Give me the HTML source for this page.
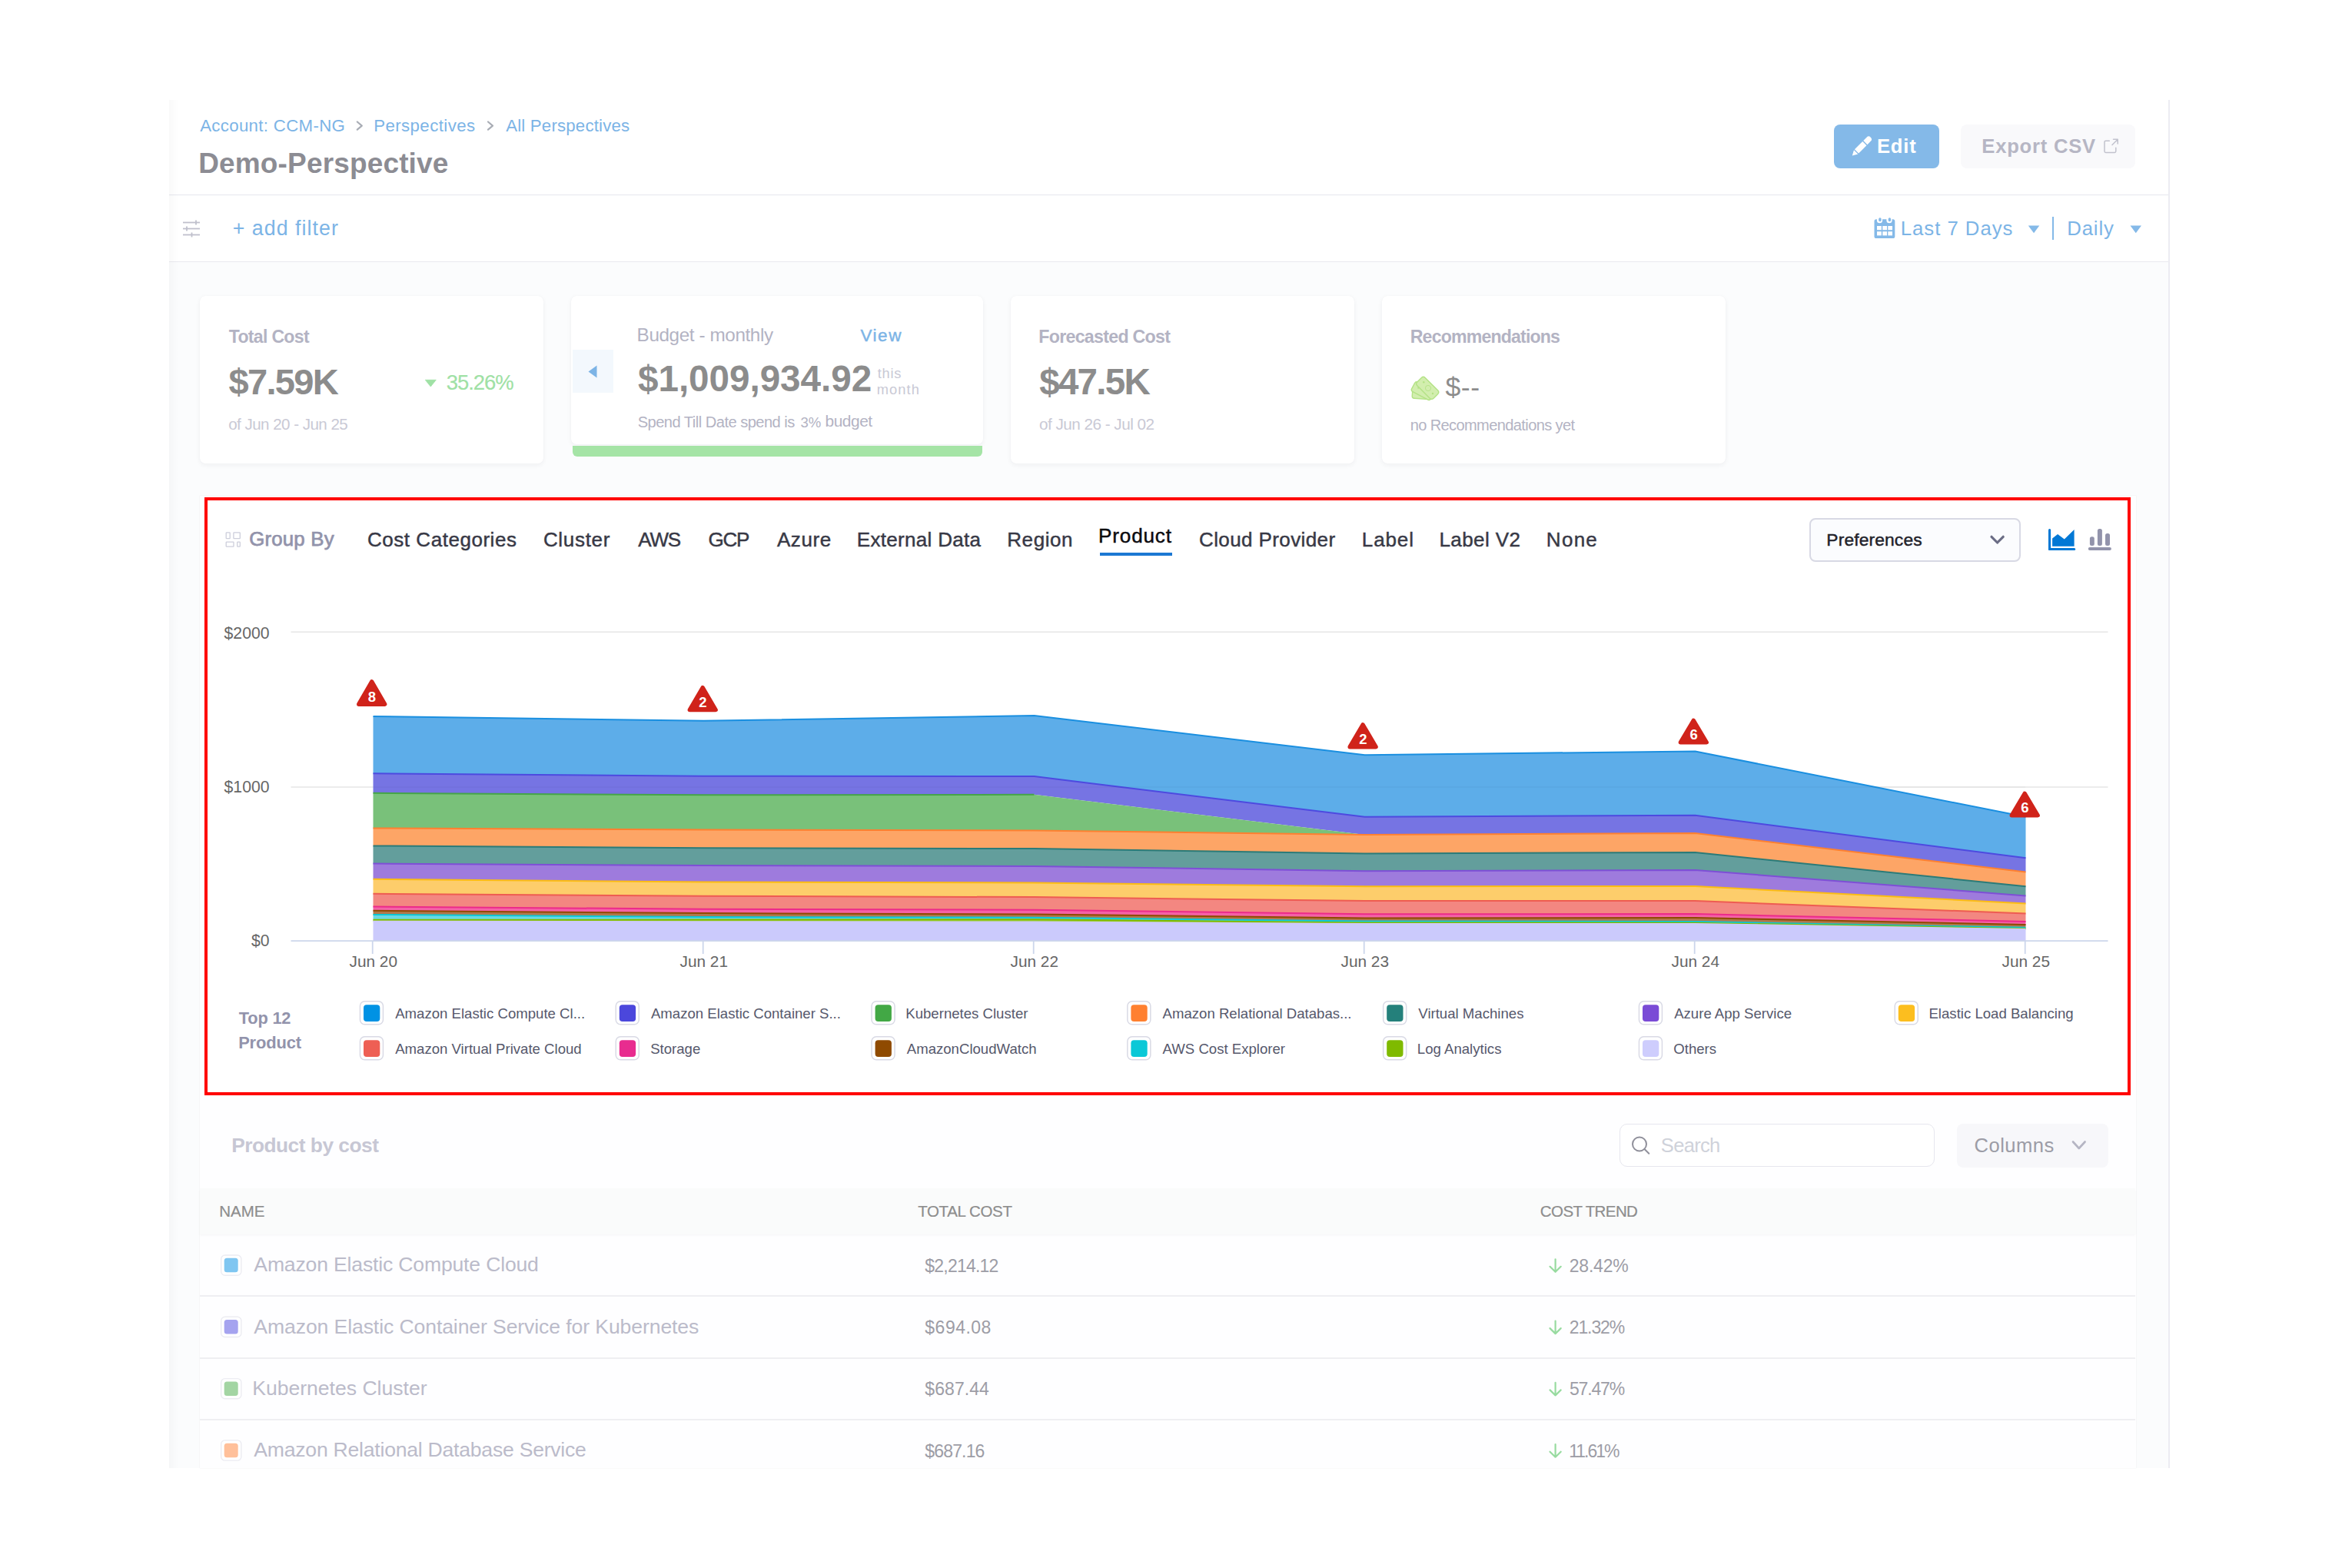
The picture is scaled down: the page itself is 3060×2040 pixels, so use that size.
<!DOCTYPE html>
<html><head><meta charset="utf-8"><style>
html,body{margin:0;padding:0;background:#ffffff;}
body{width:3060px;height:2040px;position:relative;overflow:hidden;font-family:"Liberation Sans", sans-serif;}
</style></head><body>
<div style="position:absolute;left:220px;top:130px;width:2603px;height:1780px;background:#fbfcfd"></div>
<div style="position:absolute;left:220px;top:130px;width:2601px;height:122.9px;background:#ffffff;border-bottom:1.6px solid #e9e9ef;box-sizing:content-box"></div>
<div style="position:absolute;left:220px;top:254.5px;width:2601px;height:85.8px;background:#ffffff;border-bottom:1.6px solid #e9e9ef;box-sizing:content-box"></div>
<div style="position:absolute;left:2821px;top:130px;width:2px;height:1780px;background:#ececf2"></div>
<div style="position:absolute;left:220px;top:130px;width:12px;height:1780px;background:linear-gradient(90deg,rgba(0,0,0,0.025),rgba(0,0,0,0))"></div>
<div style="position:absolute;left:2386px;top:162px;width:137px;height:57px;background:#84b9e8;border-radius:8px"></div>
<div style="position:absolute;left:2551px;top:162px;width:227px;height:57px;background:#f9f9fb;border-radius:8px"></div>
<div style="position:absolute;left:2670.3px;top:281.5px;width:2.0px;height:30.5px;background:#84b9e8"></div>
<div style="position:absolute;left:260px;top:385px;width:447px;height:218px;background:#ffffff;border-radius:7px;box-shadow:0 2px 6px rgba(40,41,61,0.055),0 0 1px rgba(40,41,61,0.06)"></div>
<div style="position:absolute;left:743px;top:385px;width:536px;height:218px;background:transparent"></div>
<div style="position:absolute;left:743px;top:385px;width:536px;height:193.2px;background:#ffffff;border-radius:7px;box-shadow:0 2px 6px rgba(40,41,61,0.055),0 0 1px rgba(40,41,61,0.06)"></div>
<div style="position:absolute;left:744.5px;top:580.2px;width:533.0px;height:13.8px;background:#a5e4a6;border-radius:0 0 6px 6px"></div>
<div style="position:absolute;left:745px;top:455px;width:53px;height:56px;background:#f3f8fd"></div>
<div style="position:absolute;left:1315px;top:385px;width:447px;height:218px;background:#ffffff;border-radius:7px;box-shadow:0 2px 6px rgba(40,41,61,0.055),0 0 1px rgba(40,41,61,0.06)"></div>
<div style="position:absolute;left:1798px;top:385px;width:447px;height:218px;background:#ffffff;border-radius:7px;box-shadow:0 2px 6px rgba(40,41,61,0.055),0 0 1px rgba(40,41,61,0.06)"></div>
<div style="position:absolute;left:260px;top:645px;width:2518.5px;height:1265px;background:#fefeff;box-shadow:0 0 1.5px rgba(40,41,61,0.10)"></div>
<div style="position:absolute;left:270px;top:650px;width:2498px;height:771px;background:#ffffff"></div>
<div style="position:absolute;left:266px;top:646.5px;width:2506px;height:778.5px;border:4px solid #ff0000;box-sizing:border-box"></div>
<div style="position:absolute;left:2354px;top:674px;width:274.5px;height:56.5px;background:#fbfcfe;border:2px solid #d8d9e4;border-radius:8px;box-sizing:border-box"></div>
<div style="position:absolute;left:260px;top:1546px;width:2518px;height:60px;background:#fafbfb;box-shadow:0 1.5px 3px rgba(40,41,61,0.035)"></div>
<div style="position:absolute;left:260px;top:1685.3px;width:2518px;height:1.5px;background:#efeff2"></div>
<div style="position:absolute;left:260px;top:1766.3px;width:2518px;height:1.5px;background:#efeff2"></div>
<div style="position:absolute;left:260px;top:1846px;width:2518px;height:1.5px;background:#efeff2"></div>
<div style="position:absolute;left:2106.5px;top:1462px;width:410.5px;height:56px;background:#ffffff;border:1.5px solid #e6e6ee;border-radius:10px;box-sizing:border-box"></div>
<div style="position:absolute;left:2546px;top:1462px;width:197px;height:56.5px;background:#f7f7fa;border-radius:8px"></div>
<svg style="position:absolute;left:0;top:0" width="3060" height="2040" viewBox="0 0 3060 2040"><line x1="378.5" y1="822.3" x2="2742.5" y2="822.3" stroke="#e6e6e6" stroke-width="1.5"/><line x1="378.5" y1="1024" x2="2742.5" y2="1024" stroke="#e6e6e6" stroke-width="1.5"/><path d="M485.5,932.0 L915.5,937.7 L1345.5,931.1 L1775.5,982.2 L2205.5,977.5 L2635.5,1062.8 L2635.5,1116.2 L2205.5,1060.8 L1775.5,1062.8 L1345.5,1010.1 L915.5,1009.8 L485.5,1006.3Z" fill="#5dade9"/><path d="M485.5,932.0 L915.5,937.7 L1345.5,931.1 L1775.5,982.2 L2205.5,977.5 L2635.5,1062.8" fill="none" stroke="#1a8fe0" stroke-width="2" stroke-linejoin="round"/><path d="M485.5,1006.3 L915.5,1009.8 L1345.5,1010.1 L1775.5,1062.8 L2205.5,1060.8 L2635.5,1116.2 L2635.5,1134.5 L2205.5,1084.1 L1775.5,1085.9 L1345.5,1033.8 L915.5,1034.3 L485.5,1031.8Z" fill="#7674e3"/><path d="M485.5,1006.3 L915.5,1009.8 L1345.5,1010.1 L1775.5,1062.8 L2205.5,1060.8 L2635.5,1116.2" fill="none" stroke="#4d4ae0" stroke-width="2" stroke-linejoin="round"/><path d="M485.5,1031.8 L915.5,1034.3 L1345.5,1033.8 L1775.5,1085.9 L2205.5,1084.1 L2635.5,1134.5 L2635.5,1134.5 L2205.5,1084.1 L1775.5,1085.9 L1345.5,1080.5 L915.5,1079.6 L485.5,1077.4Z" fill="#79c17a"/><path d="M485.5,1031.8 L915.5,1034.3 L1345.5,1033.8" fill="none" stroke="#45a548" stroke-width="2" stroke-linejoin="round"/><path d="M485.5,1077.4 L915.5,1079.6 L1345.5,1080.5 L1775.5,1085.9 L2205.5,1084.1 L2635.5,1134.5 L2635.5,1153.2 L2205.5,1109.1 L1775.5,1110.4 L1345.5,1104.1 L915.5,1103.3 L485.5,1100.4Z" fill="#fda566"/><path d="M485.5,1077.4 L915.5,1079.6 L1345.5,1080.5 L1775.5,1085.9 L2205.5,1084.1 L2635.5,1134.5" fill="none" stroke="#ff8030" stroke-width="2" stroke-linejoin="round"/><path d="M485.5,1100.4 L915.5,1103.3 L1345.5,1104.1 L1775.5,1110.4 L2205.5,1109.1 L2635.5,1153.2 L2635.5,1165.4 L2205.5,1131.9 L1775.5,1133.2 L1345.5,1126.9 L915.5,1126.1 L485.5,1123.6Z" fill="#639e9c"/><path d="M485.5,1100.4 L915.5,1103.3 L1345.5,1104.1 L1775.5,1110.4 L2205.5,1109.1 L2635.5,1153.2" fill="none" stroke="#2b7b78" stroke-width="2" stroke-linejoin="round"/><path d="M485.5,1123.6 L915.5,1126.1 L1345.5,1126.9 L1775.5,1133.2 L2205.5,1131.9 L2635.5,1165.4 L2635.5,1175.5 L2205.5,1153.0 L1775.5,1153.2 L1345.5,1148.5 L915.5,1147.5 L485.5,1143.8Z" fill="#9e7bdd"/><path d="M485.5,1123.6 L915.5,1126.1 L1345.5,1126.9 L1775.5,1133.2 L2205.5,1131.9 L2635.5,1165.4" fill="none" stroke="#7e4fd6" stroke-width="2" stroke-linejoin="round"/><path d="M485.5,1143.8 L915.5,1147.5 L1345.5,1148.5 L1775.5,1153.2 L2205.5,1153.0 L2635.5,1175.5 L2635.5,1188.5 L2205.5,1172.1 L1775.5,1172.1 L1345.5,1167.1 L915.5,1165.8 L485.5,1162.8Z" fill="#fdcd6b"/><path d="M485.5,1143.8 L915.5,1147.5 L1345.5,1148.5 L1775.5,1153.2 L2205.5,1153.0 L2635.5,1175.5" fill="none" stroke="#fbbc14" stroke-width="2" stroke-linejoin="round"/><path d="M485.5,1162.8 L915.5,1165.8 L1345.5,1167.1 L1775.5,1172.1 L2205.5,1172.1 L2635.5,1188.5 L2635.5,1199.0 L2205.5,1189.1 L1775.5,1189.3 L1345.5,1183.7 L915.5,1182.8 L485.5,1179.5Z" fill="#f38781"/><path d="M485.5,1162.8 L915.5,1165.8 L1345.5,1167.1 L1775.5,1172.1 L2205.5,1172.1 L2635.5,1188.5" fill="none" stroke="#ee5c52" stroke-width="2" stroke-linejoin="round"/><path d="M485.5,1179.5 L915.5,1182.8 L1345.5,1183.7 L1775.5,1189.3 L2205.5,1189.1 L2635.5,1199.0 L2635.5,1202.9 L2205.5,1194.1 L1775.5,1194.4 L1345.5,1189.5 L915.5,1188.1 L485.5,1184.8Z" fill="#f462a6"/><path d="M485.5,1179.5 L915.5,1182.8 L1345.5,1183.7 L1775.5,1189.3 L2205.5,1189.1 L2635.5,1199.0" fill="none" stroke="#ec2a8a" stroke-width="2" stroke-linejoin="round"/><path d="M485.5,1184.8 L915.5,1188.1 L1345.5,1189.5 L1775.5,1194.4 L2205.5,1194.1 L2635.5,1202.9 L2635.5,1206.8 L2205.5,1199.1 L1775.5,1198.5 L1345.5,1193.7 L915.5,1193.0 L485.5,1189.9Z" fill="#b0784c"/><path d="M485.5,1184.8 L915.5,1188.1 L1345.5,1189.5 L1775.5,1194.4 L2205.5,1194.1 L2635.5,1202.9" fill="none" stroke="#8f4a00" stroke-width="2" stroke-linejoin="round"/><path d="M485.5,1189.9 L915.5,1193.0 L1345.5,1193.7 L1775.5,1198.5 L2205.5,1199.1 L2635.5,1206.8 L2635.5,1208.2 L2205.5,1200.7 L1775.5,1200.4 L1345.5,1196.2 L915.5,1196.6 L485.5,1196.8Z" fill="#6ad8e3"/><path d="M485.5,1189.9 L915.5,1193.0 L1345.5,1193.7 L1775.5,1198.5 L2205.5,1199.1 L2635.5,1206.8" fill="none" stroke="#0ac8d7" stroke-width="2" stroke-linejoin="round"/><path d="M485.5,1196.8 L915.5,1196.6 L1345.5,1196.2 L1775.5,1200.4 L2205.5,1200.7 L2635.5,1208.2 L2635.5,1209.1 L2205.5,1202.0 L1775.5,1202.0 L1345.5,1199.5 L915.5,1199.3 L485.5,1198.8Z" fill="#9acd32"/><path d="M485.5,1196.8 L915.5,1196.6 L1345.5,1196.2 L1775.5,1200.4 L2205.5,1200.7 L2635.5,1208.2" fill="none" stroke="#7fba00" stroke-width="2" stroke-linejoin="round"/><path d="M485.5,1198.8 L915.5,1199.3 L1345.5,1199.5 L1775.5,1202.0 L2205.5,1202.0 L2635.5,1209.1 L2635.5,1224.0 L2205.5,1224.0 L1775.5,1224.0 L1345.5,1224.0 L915.5,1224.0 L485.5,1224.0Z" fill="#cbcafc"/><path d="M485.5,1198.8 L915.5,1199.3 L1345.5,1199.5 L1775.5,1202.0 L2205.5,1202.0 L2635.5,1209.1" fill="none" stroke="#cbcafc" stroke-width="2" stroke-linejoin="round"/><line x1="486" y1="1024" x2="2635" y2="1024" stroke="#000000" stroke-opacity="0.035" stroke-width="1.5"/><text x="350.5" y="831.2" text-anchor="end" font-family="Liberation Sans" font-size="21.2" fill="#666666">$2000</text><text x="350.5" y="1031.3" text-anchor="end" font-family="Liberation Sans" font-size="21.2" fill="#666666">$1000</text><text x="350.5" y="1230.6" text-anchor="end" font-family="Liberation Sans" font-size="21.2" fill="#666666">$0</text><text x="485.8" y="1257.6" text-anchor="middle" font-family="Liberation Sans" font-size="20.8" fill="#666666">Jun 20</text><text x="915.8" y="1257.6" text-anchor="middle" font-family="Liberation Sans" font-size="20.8" fill="#666666">Jun 21</text><text x="1345.8" y="1257.6" text-anchor="middle" font-family="Liberation Sans" font-size="20.8" fill="#666666">Jun 22</text><text x="1775.8" y="1257.6" text-anchor="middle" font-family="Liberation Sans" font-size="20.8" fill="#666666">Jun 23</text><text x="2205.8" y="1257.6" text-anchor="middle" font-family="Liberation Sans" font-size="20.8" fill="#666666">Jun 24</text><text x="2635.8" y="1257.6" text-anchor="middle" font-family="Liberation Sans" font-size="20.8" fill="#666666">Jun 25</text><line x1="378.5" y1="1224.2" x2="2742.5" y2="1224.2" stroke="#ccd6eb" stroke-width="1.8"/><line x1="484.7" y1="1224" x2="484.7" y2="1241" stroke="#ccd6eb" stroke-width="1.8"/><line x1="914.7" y1="1224" x2="914.7" y2="1241" stroke="#ccd6eb" stroke-width="1.8"/><line x1="1344.7" y1="1224" x2="1344.7" y2="1241" stroke="#ccd6eb" stroke-width="1.8"/><line x1="1774.7" y1="1224" x2="1774.7" y2="1241" stroke="#ccd6eb" stroke-width="1.8"/><line x1="2204.7" y1="1224" x2="2204.7" y2="1241" stroke="#ccd6eb" stroke-width="1.8"/><line x1="2634.7" y1="1224" x2="2634.7" y2="1241" stroke="#ccd6eb" stroke-width="1.8"/><path d="M483.7,886.9 L500.65,916.2 L466.75,916.2 Z" fill="#d0231a" stroke="#d0231a" stroke-width="5.4" stroke-linejoin="round"/><text x="484.0" y="912.7" text-anchor="middle" font-family="Liberation Sans" font-weight="700" font-size="18.5" fill="#ffffff">8</text><path d="M914.2,894.5999999999999 L931.1500000000001,923.5 L897.25,923.5 Z" fill="#d0231a" stroke="#d0231a" stroke-width="5.4" stroke-linejoin="round"/><text x="914.5" y="920" text-anchor="middle" font-family="Liberation Sans" font-weight="700" font-size="18.5" fill="#ffffff">2</text><path d="M1773.1,942.8 L1790.05,971.7 L1756.1499999999999,971.7 Z" fill="#d0231a" stroke="#d0231a" stroke-width="5.4" stroke-linejoin="round"/><text x="1773.3999999999999" y="968.2" text-anchor="middle" font-family="Liberation Sans" font-weight="700" font-size="18.5" fill="#ffffff">2</text><path d="M2203.3,937.3 L2220.25,965.8 L2186.3500000000004,965.8 Z" fill="#d0231a" stroke="#d0231a" stroke-width="5.4" stroke-linejoin="round"/><text x="2203.6000000000004" y="962.3" text-anchor="middle" font-family="Liberation Sans" font-weight="700" font-size="18.5" fill="#ffffff">6</text><path d="M2634.2,1032.3 L2651.1499999999996,1060.8 L2617.25,1060.8 Z" fill="#d0231a" stroke="#d0231a" stroke-width="5.4" stroke-linejoin="round"/><text x="2634.5" y="1057.3" text-anchor="middle" font-family="Liberation Sans" font-weight="700" font-size="18.5" fill="#ffffff">6</text><rect x="468.45" y="1302.75" width="30" height="30" rx="6" fill="#ffffff" stroke="#d9dae5" stroke-width="1.5"/><rect x="473.0" y="1307.2" width="21.3" height="21.7" rx="4" fill="#0092e4"/><rect x="801.25" y="1302.75" width="30" height="30" rx="6" fill="#ffffff" stroke="#d9dae5" stroke-width="1.5"/><rect x="805.8" y="1307.2" width="21.3" height="21.7" rx="4" fill="#4b47dc"/><rect x="1134.05" y="1302.75" width="30" height="30" rx="6" fill="#ffffff" stroke="#d9dae5" stroke-width="1.5"/><rect x="1138.6" y="1307.2" width="21.3" height="21.7" rx="4" fill="#42a845"/><rect x="1466.8500000000001" y="1302.75" width="30" height="30" rx="6" fill="#ffffff" stroke="#d9dae5" stroke-width="1.5"/><rect x="1471.4" y="1307.2" width="21.3" height="21.7" rx="4" fill="#ff8030"/><rect x="1799.65" y="1302.75" width="30" height="30" rx="6" fill="#ffffff" stroke="#d9dae5" stroke-width="1.5"/><rect x="1804.2" y="1307.2" width="21.3" height="21.7" rx="4" fill="#24807b"/><rect x="2132.45" y="1302.75" width="30" height="30" rx="6" fill="#ffffff" stroke="#d9dae5" stroke-width="1.5"/><rect x="2137.0" y="1307.2" width="21.3" height="21.7" rx="4" fill="#7a4bd6"/><rect x="2465.25" y="1302.75" width="30" height="30" rx="6" fill="#ffffff" stroke="#d9dae5" stroke-width="1.5"/><rect x="2469.8" y="1307.2" width="21.3" height="21.7" rx="4" fill="#fcbe1f"/><rect x="468.45" y="1348.75" width="30" height="30" rx="6" fill="#ffffff" stroke="#d9dae5" stroke-width="1.5"/><rect x="473.0" y="1353.2" width="21.3" height="21.7" rx="4" fill="#ee5f54"/><rect x="801.25" y="1348.75" width="30" height="30" rx="6" fill="#ffffff" stroke="#d9dae5" stroke-width="1.5"/><rect x="805.8" y="1353.2" width="21.3" height="21.7" rx="4" fill="#e82c8f"/><rect x="1134.05" y="1348.75" width="30" height="30" rx="6" fill="#ffffff" stroke="#d9dae5" stroke-width="1.5"/><rect x="1138.6" y="1353.2" width="21.3" height="21.7" rx="4" fill="#8f4a00"/><rect x="1466.8500000000001" y="1348.75" width="30" height="30" rx="6" fill="#ffffff" stroke="#d9dae5" stroke-width="1.5"/><rect x="1471.4" y="1353.2" width="21.3" height="21.7" rx="4" fill="#0ac8d7"/><rect x="1799.65" y="1348.75" width="30" height="30" rx="6" fill="#ffffff" stroke="#d9dae5" stroke-width="1.5"/><rect x="1804.2" y="1353.2" width="21.3" height="21.7" rx="4" fill="#7fba00"/><rect x="2132.45" y="1348.75" width="30" height="30" rx="6" fill="#ffffff" stroke="#d9dae5" stroke-width="1.5"/><rect x="2137.0" y="1353.2" width="21.3" height="21.7" rx="4" fill="#cecdfd"/><rect x="287.7" y="1633.0" width="26.2" height="26.2" rx="5" fill="#ffffff" stroke="#ececf2" stroke-width="1.4"/><rect x="291.7" y="1636.8" width="18" height="18.5" rx="3.5" fill="#7fc6f1"/><path d="M2023.6,1638.3 V1654.8 M2016.5,1647.8 L2023.6,1654.8 L2030.7,1647.8" fill="none" stroke="#98dba0" stroke-width="2.2" stroke-linecap="round" stroke-linejoin="round"/><rect x="287.7" y="1713.3" width="26.2" height="26.2" rx="5" fill="#ffffff" stroke="#ececf2" stroke-width="1.4"/><rect x="291.7" y="1717.1" width="18" height="18.5" rx="3.5" fill="#a5a3ef"/><path d="M2023.6,1718.6 V1735.1 M2016.5,1728.1 L2023.6,1735.1 L2030.7,1728.1" fill="none" stroke="#98dba0" stroke-width="2.2" stroke-linecap="round" stroke-linejoin="round"/><rect x="287.7" y="1793.6" width="26.2" height="26.2" rx="5" fill="#ffffff" stroke="#ececf2" stroke-width="1.4"/><rect x="291.7" y="1797.3999999999999" width="18" height="18.5" rx="3.5" fill="#a3d5a3"/><path d="M2023.6,1798.8999999999999 V1815.3999999999999 M2016.5,1808.3999999999999 L2023.6,1815.3999999999999 L2030.7,1808.3999999999999" fill="none" stroke="#98dba0" stroke-width="2.2" stroke-linecap="round" stroke-linejoin="round"/><rect x="287.7" y="1873.8999999999999" width="26.2" height="26.2" rx="5" fill="#ffffff" stroke="#ececf2" stroke-width="1.4"/><rect x="291.7" y="1877.6999999999998" width="18" height="18.5" rx="3.5" fill="#ffc09a"/><path d="M2023.6,1879.1999999999998 V1895.6999999999998 M2016.5,1888.6999999999998 L2023.6,1895.6999999999998 L2030.7,1888.6999999999998" fill="none" stroke="#98dba0" stroke-width="2.2" stroke-linecap="round" stroke-linejoin="round"/><path d="M464.8,158.5 L470.8,163.6 L464.8,168.7" fill="none" stroke="#a9adb5" stroke-width="2.2" stroke-linecap="round" stroke-linejoin="round"/><path d="M635,158.5 L641,163.6 L635,168.7" fill="none" stroke="#a9adb5" stroke-width="2.2" stroke-linecap="round" stroke-linejoin="round"/><g stroke="#bfc0cc" stroke-width="1.8" fill="none"><line x1="238" y1="289.5" x2="260" y2="289.5"/><line x1="238" y1="297.5" x2="260" y2="297.5"/><line x1="238" y1="305.5" x2="260" y2="305.5"/><line x1="255" y1="286.5" x2="255" y2="292.5"/><line x1="243" y1="294.5" x2="243" y2="300.5"/><line x1="249.5" y1="302.5" x2="249.5" y2="308.5"/></g><g transform="translate(2409.8,202.6) rotate(-45)" fill="#ffffff"><path d="M0,0 L6.8,-3.7 L6.8,3.7 Z"/><rect x="8.1" y="-3.7" width="14.6" height="7.4"/><path d="M24.1,-3.7 H30.2 A3.7,3.7 0 0 1 30.2,3.7 H24.1 Z"/></g><g fill="none" stroke="#c1c2cd" stroke-width="1.5" stroke-linecap="round" stroke-linejoin="round"><path d="M2744.3,183.2 H2739.6 Q2738,183.2 2738,184.8 V196.8 Q2738,198.4 2739.6,198.4 H2751.2 Q2752.8,198.4 2752.8,196.8 V192.3"/><path d="M2748,188.5 L2755,181.5 M2749.5,181.3 H2755.2 V187"/></g><rect x="2438.5" y="285.2" width="26.8" height="24.8" rx="2.6" fill="#84b9e8"/><g fill="#ffffff"><rect x="2441.9" y="282" width="7.2" height="8.3" rx="3.6"/><rect x="2454.4" y="282" width="7.2" height="8.3" rx="3.6"/><rect x="2442" y="294" width="5.8" height="5.2"/><rect x="2449.3" y="294" width="5.7" height="5.2"/><rect x="2456.3" y="294" width="5.7" height="5.2"/><rect x="2442" y="301.2" width="5.8" height="5.2"/><rect x="2449.3" y="301.2" width="5.7" height="5.2"/><rect x="2456.3" y="301.2" width="5.7" height="5.2"/></g><g fill="#84b9e8"><rect x="2444.2" y="283.2" width="3.4" height="5.1" rx="1.7"/><rect x="2456.7" y="283.2" width="3.4" height="5.1" rx="1.7"/></g><path d="M2638.8,293.5 L2653.3,293.5 L2646.05,303.2 Z" fill="#84b9e8"/><path d="M2771.5,293.5 L2786.0,293.5 L2778.75,303.2 Z" fill="#84b9e8"/><path d="M553.3,494.3 L567.3,494.3 L560.3,503 Z" fill="#9fe1a5" stroke="#9fe1a5" stroke-width="0.8" stroke-linejoin="round"/><path d="M776.5,475.4 L776.5,491.5 L765.5,483.5 Z" fill="#7cb4e6"/><g stroke="#b3e285" stroke-width="1.4" fill="#d2eeae"><rect x="-12.8" y="-6.8" width="25.6" height="13.6" rx="3" transform="translate(1850.3,512.2) rotate(4)"/><rect x="-14" y="-7" width="28" height="14" rx="3" transform="translate(1851,508.6) rotate(28)"/><rect x="-15" y="-7.3" width="30" height="14.6" rx="3.4" transform="translate(1857.2,504.8) rotate(45)"/></g><g fill="#b3e285"><circle cx="1852.3" cy="497.3" r="1.2"/><circle cx="1864" cy="512" r="1.2"/><circle cx="1845.3" cy="504.7" r="1.1"/><circle cx="1858" cy="505" r="3.6" fill="none" stroke="#b3e285" stroke-width="0.9"/></g><g fill="none" stroke="#cdcedb" stroke-width="1.3"><rect x="294.2" y="692.8" width="5" height="7.8" rx="0.6"/><rect x="303.9" y="692.8" width="8.4" height="7.8" rx="0.6"/><rect x="294.2" y="705.1" width="9.8" height="6" rx="0.6"/><rect x="308.7" y="705.1" width="3.6" height="6" rx="0.6"/></g><rect x="1431" y="719" width="94" height="4" fill="#1b78d3"/><path d="M2591,698.3 L2598.6,706 L2606.2,698.3" fill="none" stroke="#6b6d85" stroke-width="3.2" stroke-linecap="round" stroke-linejoin="round"/><g fill="#0278d5"><rect x="2665" y="688" width="3.1" height="28" rx="1.5"/><rect x="2665" y="712.9" width="35.2" height="3.1" rx="1.5"/><path d="M2670.1,700.4 L2677.1,695.1 L2685.8,701.5 L2698.6,688.9 V710.8 H2670.1 Z"/></g><g fill="#9293ab"><rect x="2718.9" y="698.3" width="5.9" height="11.7" rx="2.5"/><rect x="2728.9" y="688" width="6" height="22" rx="2.5"/><rect x="2739" y="693.9" width="6" height="16.1" rx="2.5"/><rect x="2716.8" y="712" width="30.1" height="4.1" rx="2"/></g><g fill="none" stroke="#8f8f9a" stroke-width="2"><circle cx="2133" cy="1488.5" r="9"/><path d="M2139.5,1495 L2145.3,1500.8" stroke-linecap="round"/></g><path d="M2697,1485.5 L2704.8,1494 L2712.6,1485.5" fill="none" stroke="#b5b5c3" stroke-width="2.6" stroke-linecap="round" stroke-linejoin="round"/></svg>
<div style="position:absolute;left:260.16px;top:152.57px;font-size:22.24px;line-height:22.24px;font-weight:400;letter-spacing:0.329px;color:#7cb4e6;white-space:pre">Account: CCM-NG</div>
<div style="position:absolute;left:486.18px;top:152.57px;font-size:22.24px;line-height:22.24px;font-weight:400;letter-spacing:0.421px;color:#7cb4e6;white-space:pre">Perspectives</div>
<div style="position:absolute;left:658.16px;top:152.57px;font-size:22.24px;line-height:22.24px;font-weight:400;letter-spacing:0.192px;color:#7cb4e6;white-space:pre">All Perspectives</div>
<div style="position:absolute;left:258.22px;top:193.88px;font-size:37px;line-height:37px;font-weight:700;letter-spacing:0.151px;color:#8c8c93;white-space:pre">Demo-Perspective</div>
<div style="position:absolute;left:302.69px;top:284.06px;font-size:26.74px;line-height:26.74px;font-weight:400;letter-spacing:1.06px;color:#7cb4e6;white-space:pre">+ add filter</div>
<div style="position:absolute;left:2441.89px;top:178.25px;font-size:25.58px;line-height:25.58px;font-weight:700;letter-spacing:0.837px;color:#ffffff;white-space:pre">Edit</div>
<div style="position:absolute;left:2578.29px;top:178.25px;font-size:25.58px;line-height:25.58px;font-weight:700;letter-spacing:0.796px;color:#b6b6c4;white-space:pre">Export CSV</div>
<div style="position:absolute;left:2472.79px;top:284.72px;font-size:25.73px;line-height:25.73px;font-weight:400;letter-spacing:0.983px;color:#7cb4e6;white-space:pre">Last 7 Days</div>
<div style="position:absolute;left:2689.19px;top:284.72px;font-size:25.73px;line-height:25.73px;font-weight:400;letter-spacing:0.872px;color:#7cb4e6;white-space:pre">Daily</div>
<div style="position:absolute;left:297.74px;top:426.96px;font-size:23.08px;line-height:23.08px;font-weight:700;letter-spacing:-0.696px;color:#b3b3c3;white-space:pre">Total Cost</div>
<div style="position:absolute;left:297.38px;top:473.09px;font-size:47.15px;line-height:47.15px;font-weight:700;letter-spacing:-1.711px;color:#8c8c8c;white-space:pre">$7.59K</div>
<div style="position:absolute;left:580.76px;top:484.38px;font-size:27.43px;line-height:27.43px;font-weight:400;letter-spacing:-1.039px;color:#9fe1a5;white-space:pre;-webkit-text-stroke:0.2px #9fe1a5">35.26%</div>
<div style="position:absolute;left:297.13px;top:542.06px;font-size:20.6px;line-height:20.6px;font-weight:400;letter-spacing:-0.544px;color:#c9c9d5;white-space:pre">of Jun 20 - Jun 25</div>
<div style="position:absolute;left:828.61px;top:424.16px;font-size:24.27px;line-height:24.27px;font-weight:400;letter-spacing:-0.401px;color:#b3b3c3;white-space:pre">Budget - monthly</div>
<div style="position:absolute;left:1119.4px;top:425.65px;font-size:22.5px;line-height:22.5px;font-weight:400;letter-spacing:1.556px;color:#7cb4e6;white-space:pre;-webkit-text-stroke:0.45px #7cb4e6">View</div>
<div style="position:absolute;left:829.97px;top:468.65px;font-size:47.67px;line-height:47.67px;font-weight:700;letter-spacing:-0.044px;color:#8c8c8c;white-space:pre">$1,009,934.92</div>
<div style="position:absolute;left:1141.72px;top:476.81px;font-size:18.3px;line-height:18.3px;font-weight:400;letter-spacing:0.762px;color:#c9c9d5;white-space:pre">this</div>
<div style="position:absolute;left:1140.78px;top:498.31px;font-size:18.3px;line-height:18.3px;font-weight:400;letter-spacing:1.073px;color:#c9c9d5;white-space:pre">month</div>
<div style="position:absolute;left:829.69px;top:538.78px;font-size:20.11px;line-height:20.11px;font-weight:400;letter-spacing:-0.532px;color:#b3b3c3;white-space:pre">Spend Till Date spend is</div>
<div style="position:absolute;left:1041.49px;top:540.66px;font-size:18.6px;line-height:18.6px;font-weight:400;letter-spacing:0px;color:#b3b3c3;white-space:pre">3%</div>
<div style="position:absolute;left:1073.55px;top:538.08px;font-size:20.93px;line-height:20.93px;font-weight:400;letter-spacing:-0.48px;color:#b3b3c3;white-space:pre">budget</div>
<div style="position:absolute;left:1351.25px;top:426.84px;font-size:23.22px;line-height:23.22px;font-weight:700;letter-spacing:-0.729px;color:#b3b3c3;white-space:pre">Forecasted Cost</div>
<div style="position:absolute;left:1352.17px;top:472.72px;font-size:47.58px;line-height:47.58px;font-weight:700;letter-spacing:-1.731px;color:#8c8c8c;white-space:pre">$47.5K</div>
<div style="position:absolute;left:1351.93px;top:541.95px;font-size:20.73px;line-height:20.73px;font-weight:400;letter-spacing:-0.52px;color:#c9c9d5;white-space:pre">of Jun 26 - Jul 02</div>
<div style="position:absolute;left:1834.75px;top:426.94px;font-size:23.11px;line-height:23.11px;font-weight:700;letter-spacing:-0.825px;color:#b3b3c3;white-space:pre">Recommendations</div>
<div style="position:absolute;left:1880.42px;top:486.66px;font-size:35.61px;line-height:35.61px;font-weight:400;letter-spacing:0.567px;color:#8c8c8c;white-space:pre">$--</div>
<div style="position:absolute;left:1834.67px;top:542.53px;font-size:20.05px;line-height:20.05px;font-weight:400;letter-spacing:-0.604px;color:#b3b3c3;white-space:pre">no Recommendations yet</div>
<div style="position:absolute;left:324.2px;top:689.46px;font-size:25.8px;line-height:25.8px;font-weight:400;letter-spacing:0.209px;color:#9293ab;white-space:pre;-webkit-text-stroke:0.75px #9293ab">Group By</div>
<div style="position:absolute;left:477.98px;top:689.37px;font-size:26.02px;line-height:26.02px;font-weight:400;letter-spacing:0.531px;color:#383946;white-space:pre;-webkit-text-stroke:0.45px #383946">Cost Categories</div>
<div style="position:absolute;left:706.88px;top:689.37px;font-size:26.02px;line-height:26.02px;font-weight:400;letter-spacing:0.691px;color:#383946;white-space:pre;-webkit-text-stroke:0.45px #383946">Cluster</div>
<div style="position:absolute;left:830.15px;top:689.37px;font-size:26.02px;line-height:26.02px;font-weight:400;letter-spacing:-1.126px;color:#383946;white-space:pre;-webkit-text-stroke:0.45px #383946">AWS</div>
<div style="position:absolute;left:921.49px;top:689.37px;font-size:26.02px;line-height:26.02px;font-weight:400;letter-spacing:-1.255px;color:#383946;white-space:pre;-webkit-text-stroke:0.45px #383946">GCP</div>
<div style="position:absolute;left:1010.95px;top:689.37px;font-size:26.02px;line-height:26.02px;font-weight:400;letter-spacing:0.585px;color:#383946;white-space:pre;-webkit-text-stroke:0.45px #383946">Azure</div>
<div style="position:absolute;left:1114.87px;top:689.37px;font-size:26.02px;line-height:26.02px;font-weight:400;letter-spacing:0.292px;color:#383946;white-space:pre;-webkit-text-stroke:0.45px #383946">External Data</div>
<div style="position:absolute;left:1310.27px;top:689.37px;font-size:26.02px;line-height:26.02px;font-weight:400;letter-spacing:0.554px;color:#383946;white-space:pre;-webkit-text-stroke:0.45px #383946">Region</div>
<div style="position:absolute;left:1559.98px;top:689.37px;font-size:26.02px;line-height:26.02px;font-weight:400;letter-spacing:0.39px;color:#383946;white-space:pre;-webkit-text-stroke:0.45px #383946">Cloud Provider</div>
<div style="position:absolute;left:1771.87px;top:689.37px;font-size:26.02px;line-height:26.02px;font-weight:400;letter-spacing:0.855px;color:#383946;white-space:pre;-webkit-text-stroke:0.45px #383946">Label</div>
<div style="position:absolute;left:1872.47px;top:689.37px;font-size:26.02px;line-height:26.02px;font-weight:400;letter-spacing:0.389px;color:#383946;white-space:pre;-webkit-text-stroke:0.45px #383946">Label V2</div>
<div style="position:absolute;left:2011.87px;top:689.37px;font-size:26.02px;line-height:26.02px;font-weight:400;letter-spacing:1.262px;color:#383946;white-space:pre;-webkit-text-stroke:0.45px #383946">None</div>
<div style="position:absolute;left:1429.05px;top:683.66px;font-size:26.16px;line-height:26.16px;font-weight:400;letter-spacing:0.797px;color:#0b0b0f;white-space:pre;-webkit-text-stroke:0.45px #0b0b0f">Product</div>
<div style="position:absolute;left:2376.33px;top:690.7px;font-size:22.8px;line-height:22.8px;font-weight:400;letter-spacing:0.137px;color:#22222a;white-space:pre;-webkit-text-stroke:0.45px #22222a">Preferences</div>
<div style="position:absolute;left:310.76px;top:1313.55px;font-size:21.8px;line-height:21.8px;font-weight:700;letter-spacing:-0.185px;color:#9293ab;white-space:pre">Top 12</div>
<div style="position:absolute;left:310.13px;top:1345.82px;font-size:21.95px;line-height:21.95px;font-weight:700;letter-spacing:-0.159px;color:#9293ab;white-space:pre">Product</div>
<div style="position:absolute;left:301.14px;top:1477.33px;font-size:26.31px;line-height:26.31px;font-weight:700;letter-spacing:-0.496px;color:#c7c7d4;white-space:pre">Product by cost</div>
<div style="position:absolute;left:2160.84px;top:1478.05px;font-size:25.58px;line-height:25.58px;font-weight:400;letter-spacing:-0.705px;color:#cfd2da;white-space:pre">Search</div>
<div style="position:absolute;left:2568.5px;top:1478.05px;font-size:25.58px;line-height:25.58px;font-weight:400;letter-spacing:0.481px;color:#9c9ca6;white-space:pre">Columns</div>
<div style="position:absolute;left:285.32px;top:1566.4px;font-size:20.5px;line-height:20.5px;font-weight:400;letter-spacing:-0.057px;color:#8d8d8d;white-space:pre;-webkit-text-stroke:0.2px #8d8d8d">NAME</div>
<div style="position:absolute;left:1194.14px;top:1566.4px;font-size:20.5px;line-height:20.5px;font-weight:400;letter-spacing:-0.359px;color:#8d8d8d;white-space:pre;-webkit-text-stroke:0.2px #8d8d8d">TOTAL COST</div>
<div style="position:absolute;left:2003.86px;top:1566.4px;font-size:20.5px;line-height:20.5px;font-weight:400;letter-spacing:-0.61px;color:#8d8d8d;white-space:pre;-webkit-text-stroke:0.2px #8d8d8d">COST TREND</div>
<div style="position:absolute;left:330.35px;top:1632.38px;font-size:26.6px;line-height:26.6px;font-weight:400;letter-spacing:-0.181px;color:#bbbbca;white-space:pre">Amazon Elastic Compute Cloud</div>
<div style="position:absolute;left:1203.35px;top:1635.73px;font-size:23px;line-height:23px;font-weight:400;letter-spacing:-0.791px;color:#9d9da6;white-space:pre">$2,214.12</div>
<div style="position:absolute;left:2041.74px;top:1635.73px;font-size:23px;line-height:23px;font-weight:400;letter-spacing:-0.208px;color:#9d9da6;white-space:pre">28.42%</div>
<div style="position:absolute;left:330.35px;top:1712.68px;font-size:26.6px;line-height:26.6px;font-weight:400;letter-spacing:-0.106px;color:#bbbbca;white-space:pre">Amazon Elastic Container Service for Kubernetes</div>
<div style="position:absolute;left:1203.35px;top:1716.03px;font-size:23px;line-height:23px;font-weight:400;letter-spacing:0.484px;color:#9d9da6;white-space:pre">$694.08</div>
<div style="position:absolute;left:2041.74px;top:1716.03px;font-size:23px;line-height:23px;font-weight:400;letter-spacing:-1.108px;color:#9d9da6;white-space:pre">21.32%</div>
<div style="position:absolute;left:328.22px;top:1792.98px;font-size:26.6px;line-height:26.6px;font-weight:400;letter-spacing:-0.02px;color:#bbbbca;white-space:pre">Kubernetes Cluster</div>
<div style="position:absolute;left:1203.35px;top:1796.33px;font-size:23px;line-height:23px;font-weight:400;letter-spacing:0.063px;color:#9d9da6;white-space:pre">$687.44</div>
<div style="position:absolute;left:2041.98px;top:1796.33px;font-size:23px;line-height:23px;font-weight:400;letter-spacing:-1.155px;color:#9d9da6;white-space:pre">57.47%</div>
<div style="position:absolute;left:330.35px;top:1873.28px;font-size:26.6px;line-height:26.6px;font-weight:400;letter-spacing:-0.242px;color:#bbbbca;white-space:pre">Amazon Relational Database Service</div>
<div style="position:absolute;left:1203.35px;top:1876.63px;font-size:23px;line-height:23px;font-weight:400;letter-spacing:-0.847px;color:#9d9da6;white-space:pre">$687.16</div>
<div style="position:absolute;left:2041.15px;top:1876.63px;font-size:23px;line-height:23px;font-weight:400;letter-spacing:-1.988px;color:#9d9da6;white-space:pre">11.61%</div>
<div style="position:absolute;left:514.16px;top:1310.16px;font-size:18.6px;line-height:18.6px;font-weight:400;letter-spacing:0px;color:#56586c;white-space:pre">Amazon Elastic Compute Cl...</div>
<div style="position:absolute;left:846.96px;top:1310.16px;font-size:18.6px;line-height:18.6px;font-weight:400;letter-spacing:0px;color:#56586c;white-space:pre">Amazon Elastic Container S...</div>
<div style="position:absolute;left:1178.27px;top:1310.16px;font-size:18.6px;line-height:18.6px;font-weight:400;letter-spacing:0px;color:#56586c;white-space:pre">Kubernetes Cluster</div>
<div style="position:absolute;left:1512.56px;top:1310.16px;font-size:18.6px;line-height:18.6px;font-weight:400;letter-spacing:0px;color:#56586c;white-space:pre">Amazon Relational Databas...</div>
<div style="position:absolute;left:1845.32px;top:1310.16px;font-size:18.6px;line-height:18.6px;font-weight:400;letter-spacing:0px;color:#56586c;white-space:pre">Virtual Machines</div>
<div style="position:absolute;left:2178.16px;top:1310.16px;font-size:18.6px;line-height:18.6px;font-weight:400;letter-spacing:0px;color:#56586c;white-space:pre">Azure App Service</div>
<div style="position:absolute;left:2509.47px;top:1310.16px;font-size:18.6px;line-height:18.6px;font-weight:400;letter-spacing:0px;color:#56586c;white-space:pre">Elastic Load Balancing</div>
<div style="position:absolute;left:514.16px;top:1356.16px;font-size:18.6px;line-height:18.6px;font-weight:400;letter-spacing:0px;color:#56586c;white-space:pre">Amazon Virtual Private Cloud</div>
<div style="position:absolute;left:846.16px;top:1356.16px;font-size:18.6px;line-height:18.6px;font-weight:400;letter-spacing:0px;color:#56586c;white-space:pre">Storage</div>
<div style="position:absolute;left:1179.76px;top:1356.16px;font-size:18.6px;line-height:18.6px;font-weight:400;letter-spacing:0px;color:#56586c;white-space:pre">AmazonCloudWatch</div>
<div style="position:absolute;left:1512.56px;top:1356.16px;font-size:18.6px;line-height:18.6px;font-weight:400;letter-spacing:0px;color:#56586c;white-space:pre">AWS Cost Explorer</div>
<div style="position:absolute;left:1843.87px;top:1356.16px;font-size:18.6px;line-height:18.6px;font-weight:400;letter-spacing:0px;color:#56586c;white-space:pre">Log Analytics</div>
<div style="position:absolute;left:2177.32px;top:1356.16px;font-size:18.6px;line-height:18.6px;font-weight:400;letter-spacing:0px;color:#56586c;white-space:pre">Others</div>
</body></html>
